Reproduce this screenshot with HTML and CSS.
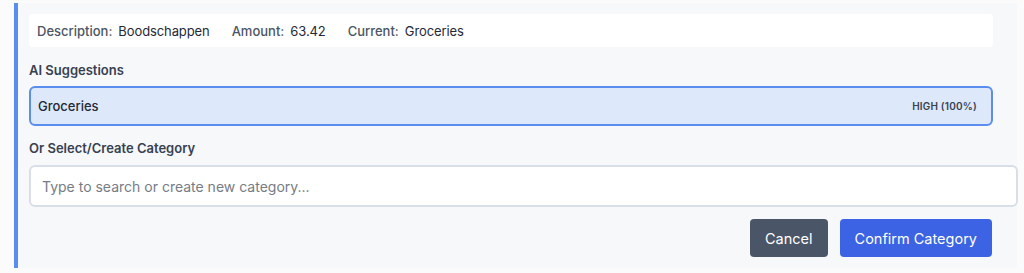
FILE: index.html
```html
<!DOCTYPE html>
<html>
<head>
<meta charset="utf-8">
<link rel="stylesheet" href="styles.css">
</head>
<body>
<div class="card">
  <div class="info">
    <span class="item"><span class="lbl">Description:</span><span class="val">Boodschappen</span></span>
    <span class="item"><span class="lbl">Amount:</span><span class="val">63.42</span></span>
    <span class="item"><span class="lbl">Current:</span><span class="val">Groceries</span></span>
  </div>
  <div class="section-label first">AI Suggestions</div>
  <div class="suggestion">
    <span class="sugg-name">Groceries</span>
    <span class="sugg-conf">HIGH (100%)</span>
  </div>
  <div class="section-label second">Or Select/Create Category</div>
  <input class="cat-input" type="text" placeholder="Type to search or create new category...">
  <div class="actions">
    <button class="btn btn-cancel">Cancel</button>
    <button class="btn btn-confirm">Confirm Category</button>
  </div>
</div>
</body>
</html>
```
FILE: styles.css
```css
html, body {
  margin: 0;
  padding: 0;
  background: #fbfbfc;
  font-family: Inter, "Noto Sans", "Liberation Sans", sans-serif;
}
.card {
  margin: 3px 0 0 14px;
  width: 1003px;
  box-sizing: border-box;
  border-left: 4px solid #5b8def;
  padding: 11px 24px 11px 11px;
  background: #f7f8fa;
}
.info {
  height: 33px;
  background: #ffffff;
  border-radius: 4px;
  padding: 0 8px;
  display: flex;
  align-items: center;
  font-size: 13px;
}
.item {
  display: flex;
  gap: 6px;
  margin-right: 22px;
}
.lbl {
  color: #4b5563;
  font-weight: 500;
}
.val {
  color: #1f2937;
  letter-spacing: -0.1px;
}
.section-label {
  font-size: 13px;
  line-height: 16px;
  font-weight: 600;
  color: #374151;
}
.section-label.first {
  margin-top: 15px;
  margin-bottom: 8px;
}
.section-label.second {
  margin-top: 14px;
  margin-bottom: 9px;
}
.suggestion {
  height: 40px;
  box-sizing: border-box;
  border: 2px solid #5b8def;
  border-radius: 6px;
  background: #dde8fa;
  padding: 0 14px 0 7px;
  display: flex;
  align-items: center;
  justify-content: space-between;
}
.sugg-name {
  font-size: 13px;
  font-weight: 500;
  color: #1f2937;
}
.sugg-conf {
  font-size: 10px;
  font-weight: 600;
  color: #374151;
  letter-spacing: 0.2px;
}
.cat-input {
  display: block;
  width: 100%;
  height: 38px;
  box-sizing: content-box;
  margin: 0;
  border: 2px solid #d8dfe8;
  border-radius: 6px;
  padding: 0 10px 0 11px;
  background: #ffffff;
  font-family: Inter, "Noto Sans", "Liberation Sans", sans-serif;
  font-size: 14px;
  color: #1f2937;
  outline: none;
}
.cat-input::placeholder {
  color: #767c85;
}
.actions {
  margin-top: 12px;
  display: flex;
  justify-content: flex-end;
  gap: 12px;
}
.btn {
  height: 38px;
  border: none;
  border-radius: 4px;
  padding: 0 15px;
  font-family: Inter, "Noto Sans", "Liberation Sans", sans-serif;
  font-size: 14.5px;
  color: #ffffff;
  cursor: pointer;
}
.btn-cancel {
  background: #4a5568;
}
.btn-confirm {
  background: #3b63e3;
  margin-right: 1px;
}
```
